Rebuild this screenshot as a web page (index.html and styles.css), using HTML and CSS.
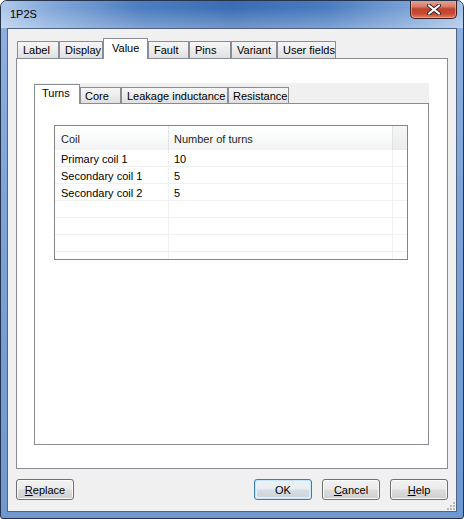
FILE: index.html
```html
<!DOCTYPE html>
<html>
<head>
<meta charset="utf-8">
<title>1P2S</title>
<link rel="stylesheet" href="styles.css">
</head>
<body>
<div class="window">
  <div class="titlebar">
    <span class="title">1P2S</span>
    <div class="close">
      <svg width="14" height="11" viewBox="0 0 14 11">
        <path d="M2 1.5 L12 9.5 M12 1.5 L2 9.5" stroke="#3b1f1f" stroke-width="4" stroke-linecap="round" fill="none"/>
        <path d="M2 1.5 L12 9.5 M12 1.5 L2 9.5" stroke="#ffffff" stroke-width="2.2" stroke-linecap="round" fill="none"/>
      </svg>
    </div>
  </div>
  <div class="client">
    <div class="tabrow outer">
      <div class="tab w-label">Label</div>
      <div class="tab w-display">Display</div>
      <div class="tab active w-value">Value</div>
      <div class="tab w-fault">Fault</div>
      <div class="tab w-pins">Pins</div>
      <div class="tab w-variant">Variant</div>
      <div class="tab w-user">User fields</div>
    </div>
    <div class="panel">
      <div class="tabrow inner">
        <div class="itab active w-turns">Turns</div>
        <div class="itab w-core">Core</div>
        <div class="itab w-leak">Leakage inductance</div>
        <div class="itab w-res">Resistance</div>
      </div>
      <div class="ipanel">
        <div class="list">
          <div class="row head">
            <div class="c1">Coil</div>
            <div class="c2">Number of turns</div>
            <div class="c3"></div>
          </div>
          <div class="row"><div class="c1">Primary coil 1</div><div class="c2">10</div><div class="c3"></div></div>
          <div class="row"><div class="c1">Secondary coil 1</div><div class="c2">5</div><div class="c3"></div></div>
          <div class="row"><div class="c1">Secondary coil 2</div><div class="c2">5</div><div class="c3"></div></div>
          <div class="row"><div class="c1"></div><div class="c2"></div><div class="c3"></div></div>
          <div class="row"><div class="c1"></div><div class="c2"></div><div class="c3"></div></div>
          <div class="row"><div class="c1"></div><div class="c2"></div><div class="c3"></div></div>
          <div class="row"><div class="c1"></div><div class="c2"></div><div class="c3"></div></div>
        </div>
      </div>
    </div>
    <div class="buttons">
      <button class="btn"><u>R</u>eplace</button>
      <div class="spacer"></div>
      <button class="btn default">OK</button>
      <button class="btn"><u>C</u>ancel</button>
      <button class="btn"><u>H</u>elp</button>
    </div>
    <svg class="grip" width="9" height="9" viewBox="0 0 9 9">
      <g fill="#b8b8b8">
        <rect x="6" y="0" width="2" height="2"/>
        <rect x="3" y="3" width="2" height="2"/>
        <rect x="6" y="3" width="2" height="2"/>
        <rect x="0" y="6" width="2" height="2"/>
        <rect x="3" y="6" width="2" height="2"/>
        <rect x="6" y="6" width="2" height="2"/>
      </g>
    </svg>
  </div>
</div>
</body>
</html>
```
FILE: styles.css
```css
html, body {
  margin: 0;
  padding: 0;
  background: #ffffff;
}

body {
  font-family: "Liberation Sans", Arial, sans-serif;
  font-size: 11px;
  color: #000000;
}

.window {
  width: 464px;
  height: 519px;
  box-sizing: border-box;
  border: 1px solid #24344c;
  border-radius: 7px 7px 3px 3px;
  padding: 0 6px 6px;
  display: flex;
  flex-direction: column;
  overflow: hidden;
  background: linear-gradient(180deg, #8fb1de 0%, #7da3d7 40%, #6f98d1 100%);
}

.titlebar {
  height: 27px;
  margin: 0 -6px;
  padding: 0 6px 0 8px;
  display: flex;
  align-items: flex-start;
  background:
    linear-gradient(180deg, rgba(255, 255, 255, 0) 25%, rgba(255, 255, 255, 0.28) 100%),
    linear-gradient(90deg, #b0c9ea 0%, #86aadb 10%, #4d7ec0 30%, #3b6db4 50%, #4a7bbf 70%, #7aa1d6 88%, #a4c0e6 100%);
}

.title {
  line-height: 27px;
  font-size: 11px;
  color: #000;
  margin-left: 1px;
}

.close {
  margin-left: auto;
  margin-top: -1px;
  width: 47px;
  height: 19px;
  box-sizing: border-box;
  border: 1px solid #3a2020;
  border-top: none;
  border-radius: 0 0 5px 5px;
  background: linear-gradient(180deg, #e7a797 0%, #d7806c 35%, #c1422c 50%, #c84a33 75%, #e07a5d 100%);
  box-shadow: inset 0 0 0 1px rgba(255, 200, 190, 0.5);
  display: flex;
  align-items: center;
  justify-content: center;
}

.close svg {
  display: block;
  margin-top: 1px;
}

.client {
  flex: 1;
  border: 1px solid #4f6484;
  background: #f0f0f0;
  padding: 9px 8px 11px;
  display: flex;
  flex-direction: column;
  position: relative;
}

/* tab rows */
.tabrow {
  display: flex;
  align-items: flex-end;
  flex-shrink: 0;
}

.tabrow.outer {
  height: 20px;
  padding-left: 1px;
}

.tab, .itab {
  box-sizing: border-box;
  border: 1px solid #898c95;
  border-bottom: none;
  background: linear-gradient(180deg, #f6f6f6 0%, #ececec 50%, #e0e0e0 100%);
  padding-left: 5px;
  white-space: nowrap;
}

.tab {
  height: 17px;
  line-height: 17px;
}

.tab.active {
  height: 21px;
  line-height: 18px;
  padding-left: 8px;
  padding-bottom: 2px;
  background: #ffffff;
  margin-bottom: -1px;
  position: relative;
  z-index: 1;
}

.w-label { width: 42px; }
.w-display { width: 44px; }
.w-value { width: 45px; }
.w-fault { width: 41px; }
.w-pins { width: 42px; }
.w-variant { width: 46px; }
.w-user { width: 59px; }

.panel {
  flex: 1;
  border: 1px solid #898c95;
  background: #ffffff;
  padding: 24px 18px 23px 17px;
  display: flex;
  flex-direction: column;
}

.tabrow.inner {
  height: 20px;
  background: #f0f0f0;
}

.itab {
  height: 16px;
  line-height: 16px;
  padding-left: 4px;
}

.itab.active {
  height: 20px;
  line-height: 16px;
  padding-left: 7px;
  padding-bottom: 3px;
  background: #ffffff;
  margin-bottom: -1px;
  position: relative;
  z-index: 1;
}

.w-turns { width: 46px; }
.w-core { width: 41px; }
.w-leak { width: 107px; padding-left: 5px; }
.w-res { width: 61px; }

.ipanel {
  flex: 1;
  border: 1px solid #898c95;
  background: #ffffff;
  padding: 21px 0 0 19px;
}

/* list view */
.list {
  width: 354px;
  height: 135px;
  box-sizing: border-box;
  border: 1px solid #848484;
  overflow: hidden;
  background: #ffffff;
}

.row {
  display: flex;
  height: 17px;
  box-sizing: border-box;
  border-bottom: 1px solid #f0f0f0;
  line-height: 18px;
}

.row > div {
  box-sizing: border-box;
  white-space: nowrap;
  overflow: hidden;
}

.c1 {
  width: 114px;
  padding-left: 6px;
  border-right: 1px solid #f0f0f0;
}

.c2 {
  width: 224px;
  padding-left: 5px;
  border-right: 1px solid #f0f0f0;
}

.c3 {
  width: 14px;
}

.row.head {
  height: 24px;
  line-height: 26px;
  border-bottom: none;
  background: linear-gradient(180deg, #ffffff 0%, #fafbfb 45%, #f2f3f4 100%);
  color: #1e1e1e;
}

.row.head .c1,
.row.head .c2 {
  border-right: 1px solid #e2e3e5;
}

.row.head .c3 {
  background: linear-gradient(180deg, #f6f6f6 0%, #ececec 100%);
}

/* buttons */
.buttons {
  display: flex;
  gap: 10px;
  margin-top: 10px;
  height: 21px;
  flex-shrink: 0;
}

.spacer {
  flex: 1;
}

.btn {
  width: 58px;
  height: 21px;
  box-sizing: border-box;
  border: 1px solid #707070;
  border-radius: 3px;
  background: linear-gradient(180deg, #f2f2f2 0%, #ebebeb 48%, #dddddd 52%, #cfcfcf 100%);
  box-shadow: inset 0 0 0 1px #fbfbfb;
  font-family: "Liberation Sans", Arial, sans-serif;
  font-size: 11px;
  color: #000;
  padding: 0;
  line-height: 18px;
}

.btn u {
  text-decoration: underline;
  text-underline-offset: 1px;
}

.btn.default {
  border-color: #3c7fb1;
  box-shadow: inset 0 0 0 1px #c8e6f6, inset 0 0 0 2px #e4f3fb;
  background: linear-gradient(180deg, #eef3f7 0%, #e6ecf1 48%, #d6dde3 52%, #cbd3da 100%);
}

.grip {
  position: absolute;
  right: 0;
  bottom: 0;
}
```
